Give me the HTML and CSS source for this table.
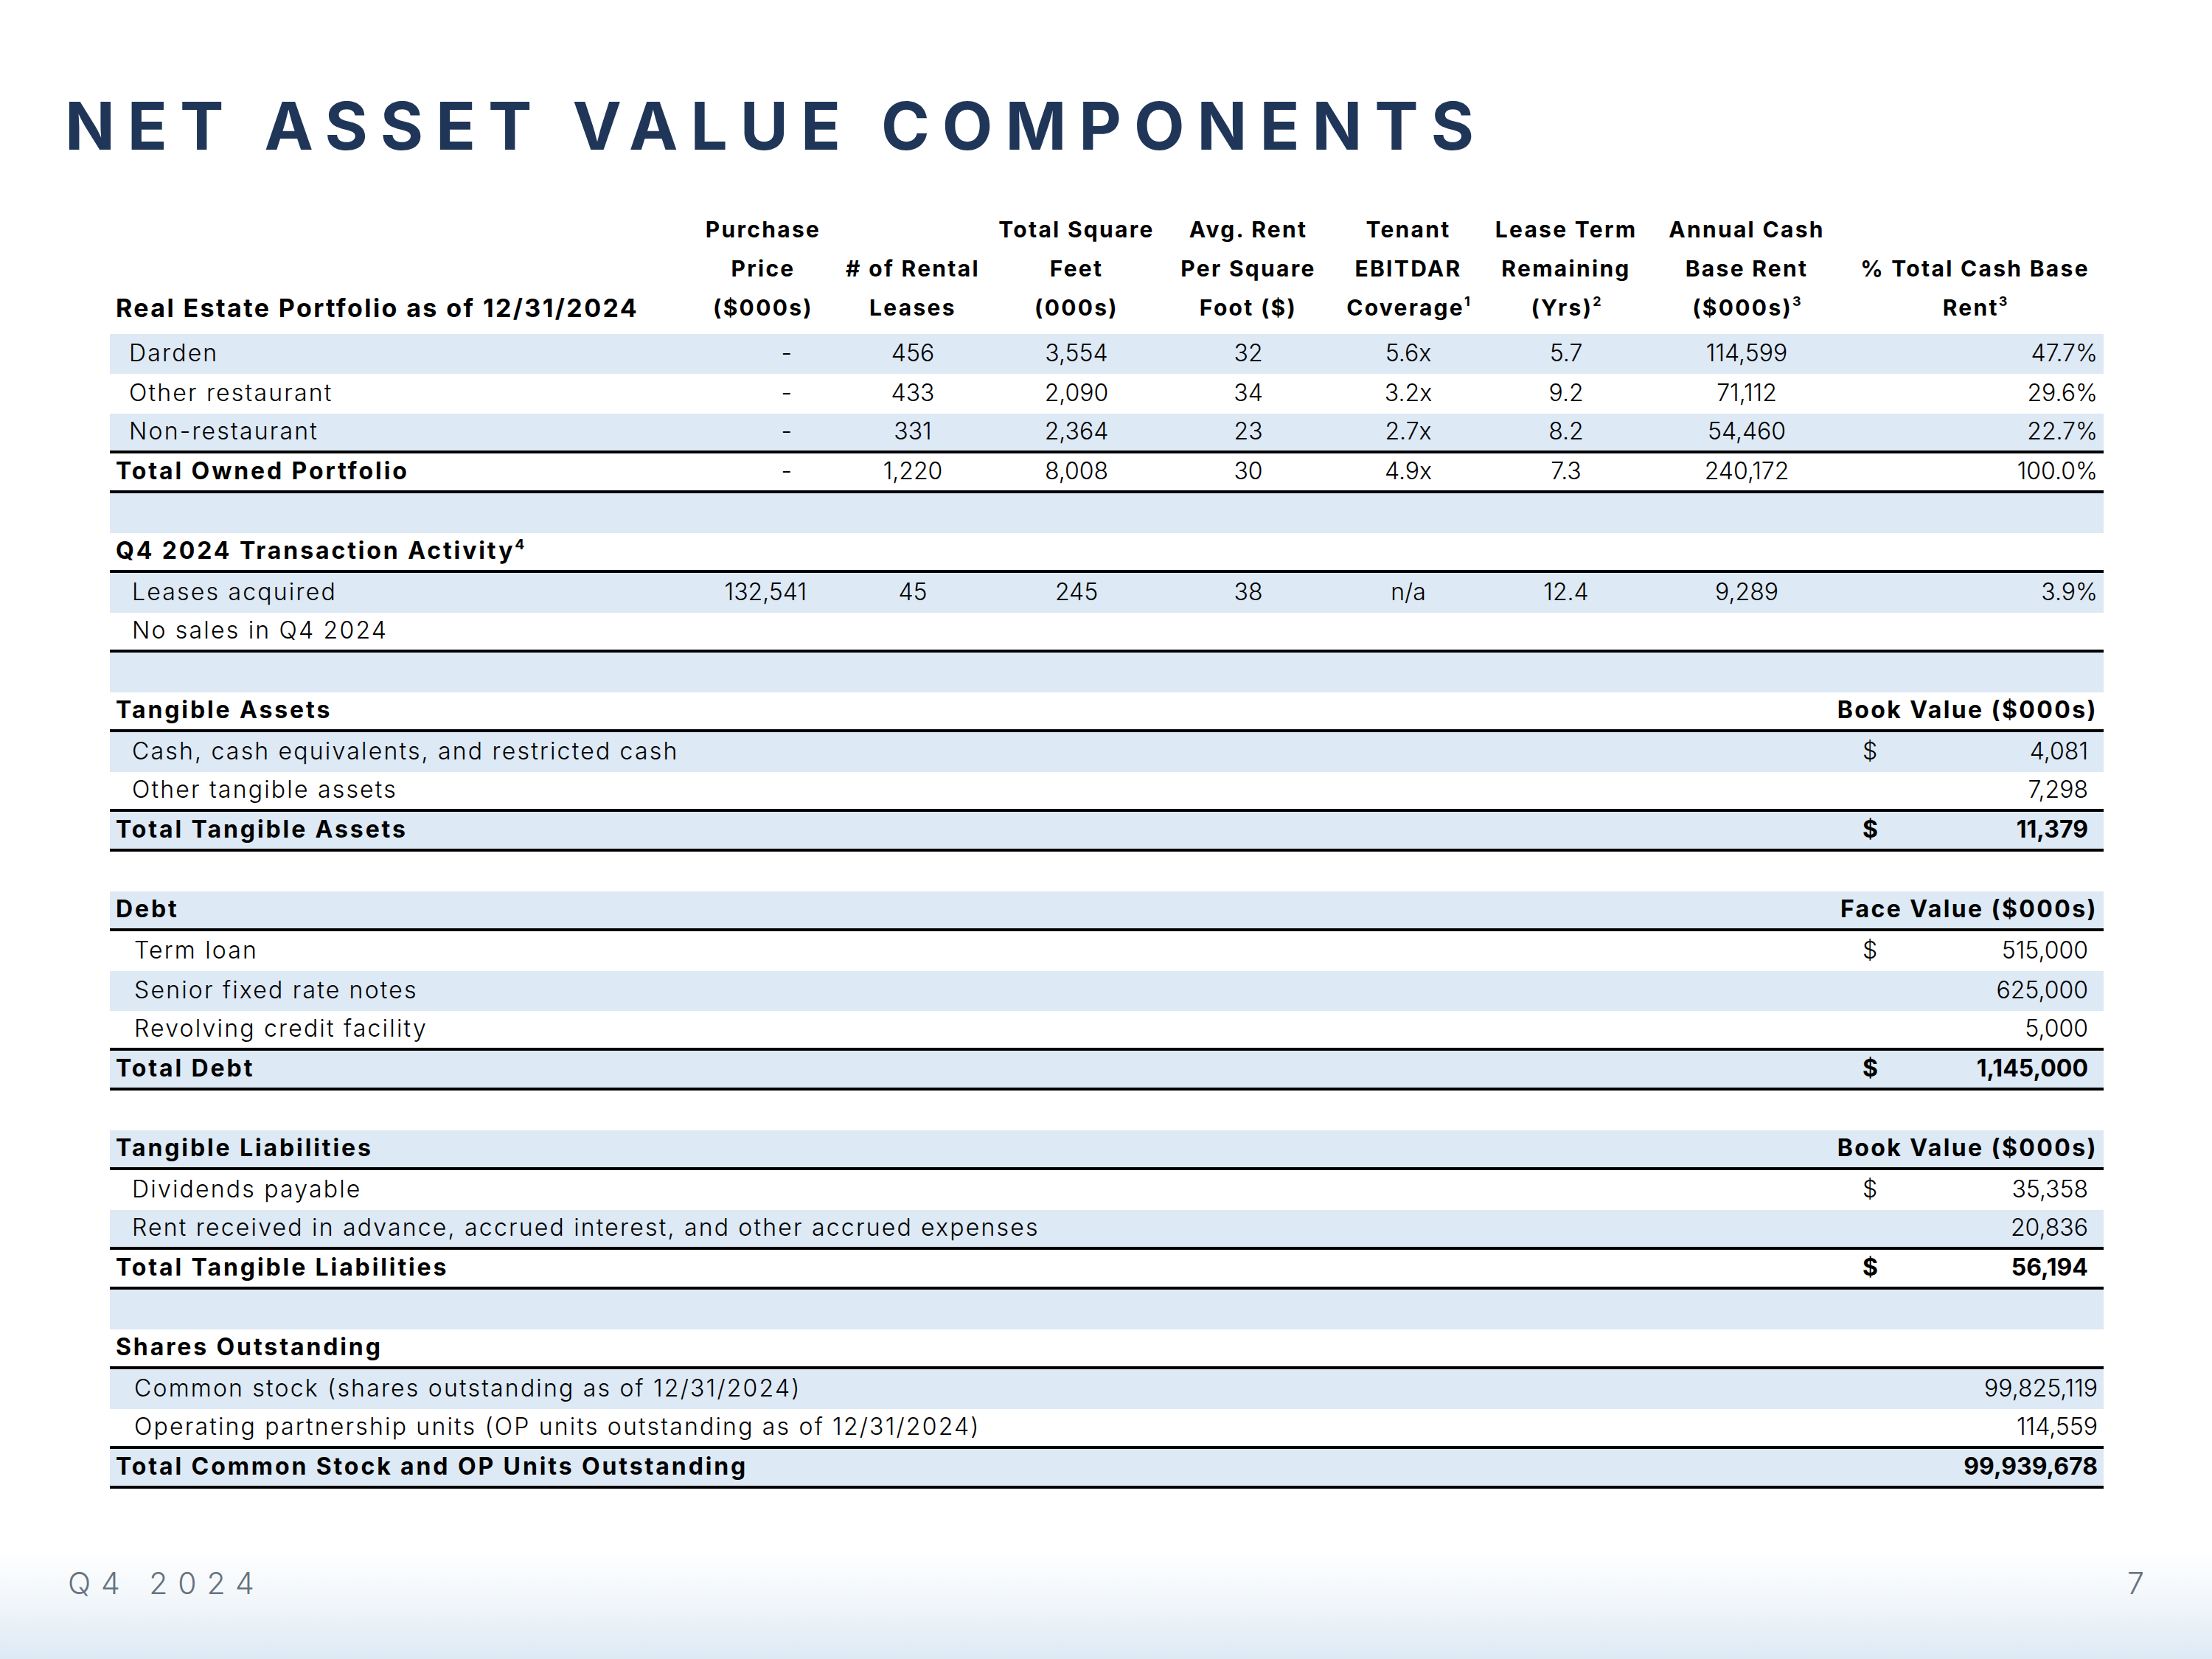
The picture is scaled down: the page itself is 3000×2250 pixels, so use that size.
FILE: index.html
```html
<!DOCTYPE html>
<html lang="en">
<head>
<meta charset="utf-8">
<title>Net Asset Value Components</title>
<link rel="stylesheet" href="styles.css">
</head>
<body>
<div class="page">
  <h1 class="title">NET ASSET VALUE COMPONENTS</h1>

  <div class="table">
    <div class="row grid head">
      <div class="h-label">Real Estate Portfolio as of 12/31/2024</div>
      <div class="h">Purchase<br>Price<br>($000s)</div>
      <div class="h"># of Rental<br>Leases</div>
      <div class="h">Total Square<br>Feet<br>(000s)</div>
      <div class="h">Avg. Rent<br>Per Square<br>Foot ($)</div>
      <div class="h">Tenant<br>EBITDAR<br>Coverage<sup>1</sup></div>
      <div class="h">Lease Term<br>Remaining<br>(Yrs)<sup>2</sup></div>
      <div class="h">Annual Cash<br>Base Rent<br>($000s)<sup>3</sup></div>
      <div class="h">% Total Cash Base<br>Rent<sup>3</sup></div>
    </div>

    <div class="row grid blue">
      <div class="lbl ind">Darden</div>
      <div class="c pp"><span class="dash">-</span></div><div class="c">456</div><div class="c">3,554</div><div class="c">32</div><div class="c">5.6x</div><div class="c">5.7</div><div class="c">114,599</div><div class="c r">47.7%</div>
    </div>
    <div class="row grid">
      <div class="lbl ind">Other restaurant</div>
      <div class="c pp"><span class="dash">-</span></div><div class="c">433</div><div class="c">2,090</div><div class="c">34</div><div class="c">3.2x</div><div class="c">9.2</div><div class="c">71,112</div><div class="c r">29.6%</div>
    </div>
    <div class="row grid blue line">
      <div class="lbl ind">Non-restaurant</div>
      <div class="c pp"><span class="dash">-</span></div><div class="c">331</div><div class="c">2,364</div><div class="c">23</div><div class="c">2.7x</div><div class="c">8.2</div><div class="c">54,460</div><div class="c r">22.7%</div>
    </div>
    <div class="row grid line">
      <div class="lbl b">Total Owned Portfolio</div>
      <div class="c pp"><span class="dash">-</span></div><div class="c">1,220</div><div class="c">8,008</div><div class="c">30</div><div class="c">4.9x</div><div class="c">7.3</div><div class="c">240,172</div><div class="c r">100.0%</div>
    </div>
    <div class="row blue"></div>
    <div class="row flex line">
      <div class="lbl b">Q4 2024 Transaction Activity<sup>4</sup></div>
    </div>
    <div class="row grid blue">
      <div class="lbl ind2">Leases acquired</div>
      <div class="c pp">132,541</div><div class="c">45</div><div class="c">245</div><div class="c">38</div><div class="c">n/a</div><div class="c">12.4</div><div class="c">9,289</div><div class="c r">3.9%</div>
    </div>
    <div class="row flex line">
      <div class="lbl ind2">No sales in Q4 2024</div>
    </div>
    <div class="row blue"></div>

    <div class="row flex line">
      <div class="lbl b">Tangible Assets</div><div class="rh b">Book Value ($000s)</div>
    </div>
    <div class="row flex blue">
      <div class="lbl ind2">Cash, cash equivalents, and restricted cash</div><div class="amt"><span>$</span><span>4,081</span></div>
    </div>
    <div class="row flex line">
      <div class="lbl ind2">Other tangible assets</div><div class="amt"><span></span><span>7,298</span></div>
    </div>
    <div class="row flex blue line">
      <div class="lbl b">Total Tangible Assets</div><div class="amt b"><span>$</span><span>11,379</span></div>
    </div>
    <div class="row"></div>

    <div class="row flex blue line">
      <div class="lbl b">Debt</div><div class="rh b">Face Value ($000s)</div>
    </div>
    <div class="row flex">
      <div class="lbl ind3">Term loan</div><div class="amt"><span>$</span><span>515,000</span></div>
    </div>
    <div class="row flex blue">
      <div class="lbl ind3">Senior fixed rate notes</div><div class="amt"><span></span><span>625,000</span></div>
    </div>
    <div class="row flex line">
      <div class="lbl ind3">Revolving credit facility</div><div class="amt"><span></span><span>5,000</span></div>
    </div>
    <div class="row flex blue line">
      <div class="lbl b">Total Debt</div><div class="amt b"><span>$</span><span>1,145,000</span></div>
    </div>
    <div class="row"></div>

    <div class="row flex blue line">
      <div class="lbl b">Tangible Liabilities</div><div class="rh b">Book Value ($000s)</div>
    </div>
    <div class="row flex">
      <div class="lbl ind2">Dividends payable</div><div class="amt"><span>$</span><span>35,358</span></div>
    </div>
    <div class="row flex blue line">
      <div class="lbl ind2">Rent received in advance, accrued interest, and other accrued expenses</div><div class="amt"><span></span><span>20,836</span></div>
    </div>
    <div class="row flex line">
      <div class="lbl b">Total Tangible Liabilities</div><div class="amt b"><span>$</span><span>56,194</span></div>
    </div>
    <div class="row blue"></div>

    <div class="row flex line">
      <div class="lbl b">Shares Outstanding</div>
    </div>
    <div class="row flex blue">
      <div class="lbl ind3">Common stock (shares outstanding as of 12/31/2024)</div><div class="rv">99,825,119</div>
    </div>
    <div class="row flex line">
      <div class="lbl ind3">Operating partnership units (OP units outstanding as of 12/31/2024)</div><div class="rv">114,559</div>
    </div>
    <div class="row flex blue line">
      <div class="lbl b">Total Common Stock and OP Units Outstanding</div><div class="rv b">99,939,678</div>
    </div>
  </div>

  <footer class="footer">
    <span class="quarter">Q4 2024</span>
    <span class="pnum">7</span>
  </footer>
</div>
</body>
</html>
```

FILE: styles.css
```css
html, body {
  margin: 0;
  padding: 0;
  background: #ffffff;
}

.page {
  width: 3000px;
  height: 2250px;
  display: flex;
  flex-direction: column;
  overflow: hidden;
  font-family: "Inter", "Liberation Sans", sans-serif;
  color: #000;
}

.title {
  margin: 126px 0 0 88px;
  font-family: "Inter", "Liberation Sans", sans-serif;
  font-weight: 700;
  font-size: 89px;
  line-height: 89px;
  letter-spacing: 17px;
  color: #203659;
}

.table {
  margin: 70px 0 0 149px;
  width: 2704px;
}

.row {
  height: 54px;
  box-sizing: border-box;
  padding-bottom: 4px;
  font-size: 32px;
  font-weight: 300;
}

.row.blue { background: #dde9f5; }
.row.line { border-bottom: 4px solid #000; }

.grid {
  display: grid;
  grid-template-columns: 785px 202px 204px 240px 226px 208px 220px 270px 349px;
  align-items: center;
}

.flex {
  display: flex;
  align-items: center;
  justify-content: space-between;
}

.head {
  height: auto;
  padding-bottom: 9px;
  align-items: end;
}

.h-label {
  font-weight: 700;
  font-size: 34px;
  line-height: 53px;
  letter-spacing: 2.4px;
  padding-left: 8px;
  white-space: nowrap;
}

.h {
  font-weight: 700;
  font-size: 30px;
  line-height: 53px;
  letter-spacing: 2.3px;
  text-align: center;
  white-space: nowrap;
}

sup {
  font-size: 0.6em;
  line-height: 0;
  letter-spacing: 0;
  vertical-align: 0.7em;
}

.lbl {
  white-space: nowrap;
  letter-spacing: 2.2px;
}
.lbl.ind { padding-left: 26px; }
.lbl.ind2 { padding-left: 30px; }
.lbl.ind3 { padding-left: 33px; }
.lbl.b {
  padding-left: 8px;
  letter-spacing: 2.9px;
}
.b { font-weight: 700; }

.c {
  text-align: center;
  white-space: nowrap;
}
.c.pp {
  text-align: right;
  padding-right: 42px;
}
.dash { margin-right: 20px; }
.c.r {
  text-align: right;
  padding-right: 8px;
}

.rh {
  padding-right: 8px;
  white-space: nowrap;
  letter-spacing: 2.4px;
}

.amt {
  width: 329px;
  box-sizing: border-box;
  display: flex;
  justify-content: space-between;
  padding: 0 21px 0 2px;
}

.rv {
  padding-right: 8px;
}

.footer {
  margin-top: auto;
  height: 150px;
  box-sizing: border-box;
  display: flex;
  justify-content: space-between;
  align-items: center;
  padding: 0 92px 56px 92px;
  background: linear-gradient(to bottom, #ffffff 0%, #f4f8fb 40%, #dde9f4 100%);
  font-family: "Inter", "Liberation Sans", sans-serif;
  font-weight: 300;
  font-size: 41px;
  color: #667380;
}

.quarter {
  letter-spacing: 0.34em;
}
```
